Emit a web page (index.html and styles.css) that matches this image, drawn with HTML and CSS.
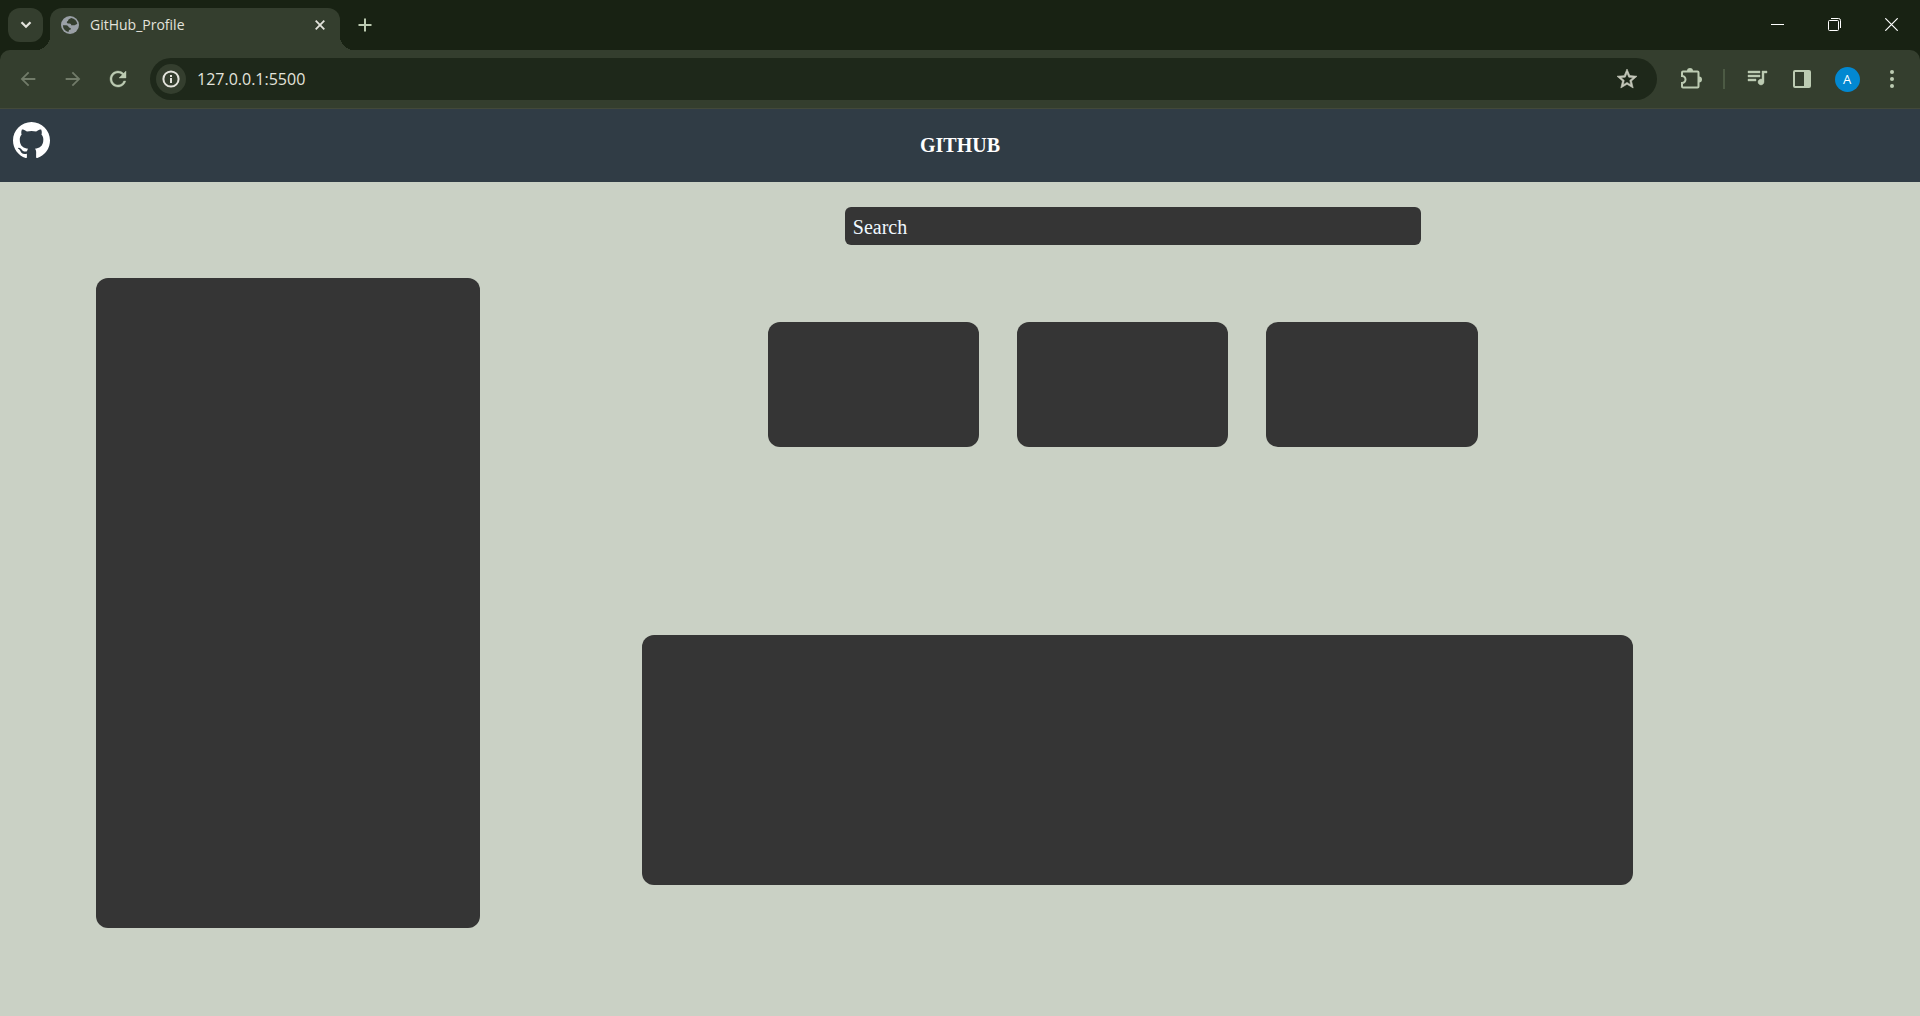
FILE: index.html
```html
<!DOCTYPE html>
<html lang="en">
<head>
<meta charset="utf-8">
<meta name="viewport" content="width=device-width, initial-scale=1">
<title>GitHub_Profile</title>
<link rel="stylesheet" href="styles.css">
</head>
<body>
<div class="tabstrip">
  <button class="tab-search" type="button" aria-label="Search tabs">
    <svg width="12" height="8" viewBox="0 0 12 8" fill="none" stroke="currentColor" stroke-width="2.300"><path d="M1.500 1.200 6 5.700l4.500-4.500"/></svg>
  </button>
  <div class="tab">
    <svg class="favicon" width="18" height="18" viewBox="0 0 18 18"><circle cx="9" cy="9" r="9" fill="#9aa0a6"/><path d="M10.200 1.900c-1 .9-3 1-3 2.300 0 1.200-1.400.8-1.400 2 0 1 1.200 1.300 2.600 1.200 1.500 0 1.800.8 1.800 1.800h3.200c1.400 0 1.500-1.200 2.900-1.200a7.200 7.200 0 0 0-6.100-6.100zM1.900 9.200c1.600.1 3.700-.2 4.800.6 1 .7.7 1.700 1.900 1.900.9.200 1.300.5 1.300 1.300 0 .9-1.800.7-2.100 1.600-.2.600.1 1.200-.5 1.300a7.200 7.200 0 0 1-5.400-6.700z" fill="#343e2e"/></svg>
    <span class="tab-title">GitHub_Profile</span>
    <button class="tab-close" type="button" aria-label="Close tab">
      <svg width="10" height="10" viewBox="0 0 10 10" stroke="currentColor" stroke-width="1.800"><path d="m.7.7 8.600 8.600M9.300.7.7 9.300"/></svg>
    </button>
  </div>
  <button class="new-tab" type="button" aria-label="New tab">
    <svg width="14" height="14" viewBox="0 0 14 14" stroke="currentColor" stroke-width="2"><path d="M7 .5v13M.5 7h13"/></svg>
  </button>
  <div class="window-controls">
    <button type="button" aria-label="Minimize"><svg width="13" height="13" viewBox="0 0 13 13" stroke="currentColor"><path d="M0 6.500h13"/></svg></button>
    <button type="button" aria-label="Restore"><svg width="13" height="13" viewBox="0 0 13 13" fill="none" stroke="currentColor"><rect x=".5" y="2.500" width="10" height="10" rx="1"/><path d="M3 .5h7.500a2 2 0 0 1 2 2V10"/></svg></button>
    <button type="button" aria-label="Close"><svg width="13" height="13" viewBox="0 0 13 13" stroke="currentColor" stroke-width="1.200"><path d="m.3.3 12.400 12.400M12.700.3.3 12.700"/></svg></button>
  </div>
</div>
<div class="toolbar">
  <div class="tools">
    <button class="muted" type="button" aria-label="Back"><svg width="22" height="22" viewBox="0 0 24 24" fill="currentColor"><path d="M20 11H7.830l5.590-5.590L12 4l-8 8 8 8 1.410-1.410L7.830 13H20v-2z"/></svg></button>
    <button class="muted" type="button" aria-label="Forward"><svg width="22" height="22" viewBox="0 0 24 24" fill="currentColor"><path d="m12 4-1.410 1.410L16.170 11H4v2h12.170l-5.580 5.590L12 20l8-8z"/></svg></button>
    <button type="button" aria-label="Reload"><svg width="24" height="24" viewBox="0 0 24 24" fill="currentColor" stroke="currentColor" stroke-width=".4"><path d="M17.650 6.350A7.958 7.958 0 0 0 12 4c-4.420 0-7.990 3.580-7.990 8s3.570 8 7.990 8c3.730 0 6.840-2.550 7.730-6h-2.080A5.990 5.990 0 0 1 12 18c-3.310 0-6-2.690-6-6s2.690-6 6-6c1.660 0 3.140.690 4.220 1.780L13 11h7V4l-2.350 2.350z"/></svg></button>
  </div>
  <div class="address">
    <button class="site-info" type="button" aria-label="Site information"><svg width="18" height="18" viewBox="0 0 18 18" fill="none" stroke="currentColor" stroke-width="2"><circle cx="9" cy="9" r="7.600"/><path d="M9 8v5M9 5v2"/></svg></button>
    <input type="text" aria-label="Address" value="127.0.0.1:5500">
    <button class="bookmark" type="button" aria-label="Bookmark this tab"><svg width="24" height="24" viewBox="0 0 24 24" fill="currentColor" stroke="currentColor" stroke-width=".6"><path d="m22 9.240-7.190-.620L12 2 9.190 8.630 2 9.240l5.460 4.730L5.820 21 12 17.270 18.180 21l-1.630-7.030L22 9.240zM12 15.400l-3.760 2.270 1-4.280-3.320-2.880 4.380-.380L12 6.100l1.710 4.040 4.380.380-3.320 2.880 1 4.280L12 15.400z"/></svg></button>
  </div>
  <button type="button" aria-label="Extensions"><svg width="22" height="22" viewBox="0 0 22 22" fill="none" stroke="currentColor" stroke-width="2"><path d="M3 3.500h14.500q1 0 1 1v14q0 1-1 1H3q-1 0-1-1V15a3.500 3.500 0 0 0 0-7V4.500q0-1 1-1z"/><path d="M7 3a3 3 0 0 1 6 0zM19 8.500a3 3 0 0 1 0 6z" fill="currentColor" stroke="none"/></svg></button>
  <span class="divider"></span>
  <div class="tools">
    <button type="button" aria-label="Media controls"><svg width="24" height="24" viewBox="0 0 24 24" fill="currentColor" stroke="currentColor" stroke-width=".4"><path d="M15 4H3v2h12V4zm0 4H3v2h12V8zM3 14h8v-2H3v2zM17 4v8.180c-.310-.110-.650-.180-1-.180-1.660 0-3 1.340-3 3s1.340 3 3 3 3-1.340 3-3V6h3V4h-5z"/></svg></button>
    <button type="button" aria-label="Side panel"><svg width="18" height="18" viewBox="0 0 18 18"><rect x="1" y="1" width="16" height="16" rx="1" fill="none" stroke="currentColor" stroke-width="2"/><path d="M11 1h6v16h-6z" fill="currentColor"/></svg></button>
    <button type="button" aria-label="Profile"><span class="avatar">A</span></button>
    <button type="button" aria-label="Menu"><svg width="4" height="18" viewBox="0 0 4 18" fill="currentColor"><circle cx="2" cy="2" r="2"/><circle cx="2" cy="9" r="2"/><circle cx="2" cy="16" r="2"/></svg></button>
  </div>
</div>
<header class="header">
  <a class="logo" href="#" aria-label="GitHub"><svg width="37" height="37" viewBox="0 0 16 16" fill="currentColor"><path d="M8 0C3.580 0 0 3.580 0 8c0 3.540 2.290 6.530 5.470 7.590.400.070.550-.170.550-.380 0-.190-.010-.820-.010-1.490-2.010.370-2.530-.490-2.690-.940-.090-.230-.480-.940-.820-1.130-.280-.150-.680-.520-.010-.530.630-.010 1.080.580 1.230.820.720 1.210 1.870.870 2.330.660.070-.520.280-.870.510-1.070-1.780-.200-3.640-.890-3.640-3.950 0-.870.310-1.590.820-2.150-.080-.200-.360-1.020.080-2.120 0 0 .670-.210 2.200.820.640-.180 1.320-.270 2-.270.680 0 1.360.090 2 .270 1.530-1.040 2.200-.820 2.200-.820.440 1.100.160 1.920.080 2.120.510.560.820 1.270.820 2.150 0 3.070-1.870 3.750-3.650 3.950.290.250.540.730.540 1.480 0 1.070-.010 1.930-.010 2.200 0 .210.150.460.550.380A8.013 8.013 0 0 0 16 8c0-4.420-3.580-8-8-8z"/></svg></a>
  <h1>GITHUB</h1>
</header>
<main class="page">
  <aside class="profile panel"></aside>
  <div class="content">
    <input class="search" type="search" placeholder="Search" aria-label="Search">
    <div class="cards">
      <section class="panel"></section>
      <section class="panel"></section>
      <section class="panel"></section>
    </div>
    <section class="details panel"></section>
  </div>
</main>
</body>
</html>
```
FILE: styles.css
```css
* { box-sizing: border-box; }

body {
  margin: 0;
  min-height: 100vh;
  display: flex;
  flex-direction: column;
  background: #cad1c5;
  font-family: "Liberation Serif", "Times New Roman", serif;
}

button {
  display: flex;
  align-items: center;
  justify-content: center;
  padding: 0;
  border: 0;
  background: none;
  color: inherit;
  font: inherit;
}

svg { display: block; }

/* Browser tabs */
.tabstrip {
  display: flex;
  height: 50px;
  padding-left: 8px;
  background: #182213;
  color: #e3e3dc;
  font-family: "Open Sans", "Noto Sans", sans-serif;
}

.tab-search {
  width: 35px;
  height: 34px;
  margin: 8px 7px 0 0;
  border-radius: 12px;
  background: #343e2e;
}

.tab {
  position: relative;
  display: flex;
  align-items: center;
  width: 290px;
  height: 42px;
  margin-top: 8px;
  padding: 0 10px 8px 11px;
  border-radius: 12px 12px 0 0;
  background: #343e2e;
}

.tab::before,
.tab::after {
  content: "";
  position: absolute;
  bottom: 0;
  width: 14px;
  height: 14px;
}

.tab::before {
  right: 100%;
  background: radial-gradient(circle at 0 0, transparent 14px, #343e2e 14px);
}

.tab::after {
  left: 100%;
  background: radial-gradient(circle at 100% 0, transparent 14px, #343e2e 14px);
}

.tab-title {
  flex: 1;
  margin-left: 11px;
  font-size: 14px;
  line-height: 20px;
}

.tab-close { width: 20px; height: 20px; }

.new-tab {
  width: 34px;
  height: 34px;
  margin: 8px 0 0 8px;
  color: #bccbb2;
}

.window-controls {
  display: flex;
  margin-left: auto;
  color: #fff;
}

.window-controls button { width: 57px; height: 48px; }

/* Browser toolbar */
.toolbar {
  display: flex;
  align-items: center;
  height: 59px;
  padding: 0 10px;
  border-bottom: 1px solid #43493a;
  border-radius: 10px 10px 0 0;
  background: #343e2e;
  color: #bccbb2;
  font-family: "Open Sans", "Noto Sans", sans-serif;
}

.tabstrip + .toolbar {
  background:
    radial-gradient(circle at 50% 50%, #343e2e, #343e2e);
}

.toolbar button { width: 36px; height: 36px; }

.toolbar .muted { color: #717b69; }

.tools { display: flex; gap: 9px; }

.address {
  flex: 1;
  display: flex;
  align-items: center;
  height: 42px;
  margin: 0 16px 0 14px;
  padding: 0 12px 0 6px;
  border-radius: 21px;
  background: #1e281a;
}

.address .site-info {
  width: 30px;
  height: 30px;
  border-radius: 50%;
  background: #343e2e;
  color: #e3e3dc;
}

.address input {
  flex: 1;
  margin-left: 11px;
  padding: 0;
  border: 0;
  background: none;
  color: #e3e3dc;
  font: 16px/24px "Open Sans", "Noto Sans", sans-serif;
}

.address .bookmark { color: #c5c8bb; }

.divider {
  width: 2px;
  height: 20px;
  margin: 0 14px;
  background: #4c5a44;
}

.avatar {
  width: 25px;
  border-radius: 50%;
  background: #0288d1;
  color: #fff;
  font-size: 13px;
  line-height: 25px;
}

.tabstrip { box-shadow: 0 10px #182213; }
.toolbar { position: relative; }
.tab { z-index: 1; }

/* Page header */
.header {
  display: grid;
  grid-template-columns: 1fr auto 1fr;
  align-items: center;
  min-height: 73px;
  padding: 0 13px 2px;
  background: #303c45;
  color: #fff;
}

.logo {
  align-self: start;
  justify-self: start;
  margin-top: 13px;
  color: #fff;
}

h1 {
  margin: 0;
  font-size: 20px;
  line-height: 24px;
}

/* Profile page */
.page {
  flex: 1;
  display: grid;
  grid-template-columns: 20vw 1fr;
  align-items: start;
  padding: 25px 0 25px 5vw;
}

.panel {
  border-radius: 12px;
  background: #353535;
}

.profile {
  height: 650px;
  margin-top: 71px;
}

.content {
  display: flex;
  flex-direction: column;
}

.search {
  width: 30vw;
  height: 38px;
  margin-left: 19vw;
  padding: 2px 8px 0;
  border: 0;
  border-radius: 6px;
  background: #353535;
  color: #f0f8ff;
  font: 20px/24px "Liberation Serif", "Times New Roman", serif;
}

.search::placeholder { color: #f0f8ff; }

.cards {
  display: grid;
  grid-template-columns: repeat(3, 11vw);
  gap: 38px;
  margin: 77px 0 188px 15vw;
}

.cards .panel { height: 125px; }

.details {
  width: 51.6vw;
  height: 250px;
  margin-left: 8.46vw;
}
```
